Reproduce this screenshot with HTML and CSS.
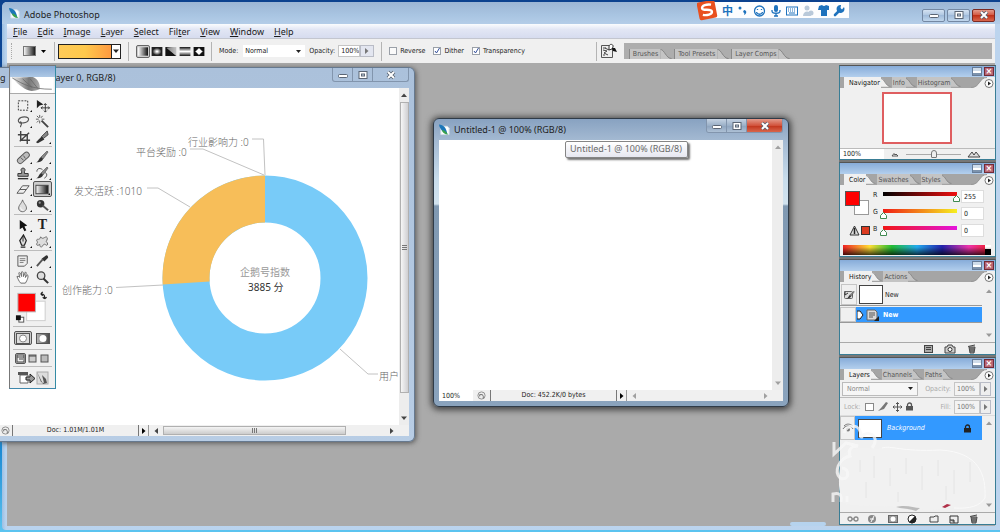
FILE: index.html
```html
<!DOCTYPE html>
<html lang="en">
<head>
<meta charset="utf-8">
<title>Adobe Photoshop</title>
<link rel="stylesheet" href="styles.css">
</head>
<body>
<svg class="defs" aria-hidden="true">
  <defs>
    <linearGradient id="g-bw"><stop offset="0" stop-color="#fff"/><stop offset="1" stop-color="#111"/></linearGradient>
    <linearGradient id="g-wb"><stop offset="0" stop-color="#111"/><stop offset="1" stop-color="#fff"/></linearGradient>
    <radialGradient id="g-rad"><stop offset=".1" stop-color="#fff"/><stop offset="1" stop-color="#222"/></radialGradient>
    <linearGradient id="g-ref" x2="0" y2="1"><stop offset="0" stop-color="#111"/><stop offset=".5" stop-color="#fff"/><stop offset="1" stop-color="#111"/></linearGradient>
    <linearGradient id="g-feather"><stop offset="0" stop-color="#eee"/><stop offset=".6" stop-color="#777"/><stop offset="1" stop-color="#aaa"/></linearGradient>
    <symbol id="tab-end" viewBox="0 0 14 11"><path d="M0 0C4 0 6 11 12 11H0Z" fill="#c4c4c4"/><path d="M0 .5C4 .5 6 10.500 12 10.500" fill="none" stroke="#808080"/></symbol>
    <symbol id="tab-on" viewBox="0 0 14 11"><path d="M0 0C4 0 6 11 12 11H0Z" fill="#f0f0f0"/><path d="M0 .5C4 .5 6 10.500 12 10.500" fill="none" stroke="#8a8a8a"/></symbol>
    <symbol id="fly" viewBox="0 0 24 11"><path d="M0 11C9 11 8 1 16 0H24V11Z" fill="#f0f0f0"/><path d="M0 10.500C9 10.500 8 .5 16 .5" fill="none" stroke="#999"/><circle cx="18" cy="6.500" r="4" fill="#fff" stroke="#777"/><path d="M17 4.500L20 6.500L17 8.500Z" fill="#222"/></symbol>
    <symbol id="win-min" viewBox="0 0 12 10"><rect x="1.500" y="4.500" width="9" height="3" rx="1" fill="#fff" stroke="#5b6675"/></symbol>
    <symbol id="win-max" viewBox="0 0 12 10"><rect x="2" y="1.500" width="8" height="7" fill="#fff" stroke="#5b6675"/><rect x="4.500" y="4" width="3" height="2" fill="#c9d6e6" stroke="#5b6675"/></symbol>
    <symbol id="win-x" viewBox="0 0 12 10"><path d="M3 2L9 8M9 2L3 8" stroke="#56606e" stroke-width="3.600"/><path d="M3 2L9 8M9 2L3 8" stroke="#fff" stroke-width="2"/></symbol>
    <symbol id="ps" viewBox="0 0 12 12"><path d="M2 2H9L11 4V11H2Z" fill="#fff" stroke="#d5dfe6"/><path d="M0 0C5 0 8 4 9 10C5 9 1 6 0 0Z" fill="#1c76b8"/><path d="M3 6C6 6 8 8 10 11C6 11 4 9 3 6Z" fill="#3ba24e"/></symbol>
    <symbol id="spin" viewBox="0 0 10 10"><circle cx="5" cy="5" r="4" fill="#eee" stroke="#888"/><path d="M3 4H6L7 6V8M3 4V6" fill="none" stroke="#666"/></symbol>
    <symbol id="note" viewBox="0 0 14 12"><path d="M1 1H9L11 3V11H1Z" fill="#d8d8d8" stroke="#666"/><path d="M3 4H9M3 6H9M3 8H7" stroke="#555"/><path d="M8 12L13 7V12Z" fill="#222"/></symbol>
    <symbol id="trash" viewBox="0 0 12 10"><path d="M3 3H9L8 9H4Z" fill="#999" stroke="#444"/><path d="M2 2.500L9 1M5 4V8M7 4V8" stroke="#444"/></symbol>
    <symbol id="lock" viewBox="0 0 9 9"><path d="M2.500 4V3A2 2 0 0 1 6.500 3V4" fill="none" stroke="currentColor" stroke-width="1.300"/><rect x="1" y="4" width="7" height="4.500" fill="currentColor"/></symbol>
    <symbol id="brush" viewBox="0 0 14 14"><path d="M12 1L13 2L8 9L6 7Z" fill="#888" stroke="#444" stroke-width=".6"/><path d="M6 7L8 9C7 12 4 12 1 12.500C4 11 4 8 6 7Z" fill="#333"/></symbol>
    <symbol id="up" viewBox="0 0 8 6"><path d="M1 5L4 1.500L7 5Z" fill="currentColor"/></symbol>
    <symbol id="down" viewBox="0 0 8 6"><path d="M1 1.500L4 5L7 1.500Z" fill="currentColor"/></symbol>
    <symbol id="left" viewBox="0 0 6 8"><path d="M5 1L1.500 4L5 7Z" fill="currentColor"/></symbol>
    <symbol id="right" viewBox="0 0 6 8"><path d="M1 1L4.500 4L1 7Z" fill="currentColor"/></symbol>
  </defs>
</svg>

<div class="app">
  <header class="titlebar">
    <svg class="app-icon"><use href="#ps"/></svg>
    <h1 class="app-title">Adobe Photoshop</h1>
    <div class="app-buttons">
      <button class="app-btn" aria-label="Minimize"><svg class="glyph"><use href="#win-min"/></svg></button>
      <button class="app-btn" aria-label="Restore"><svg class="glyph"><use href="#win-max"/></svg></button>
      <button class="app-btn red" aria-label="Close"><svg class="glyph"><use href="#win-x"/></svg></button>
    </div>
  </header>
  <nav class="menubar">
    <button><u>F</u>ile</button><button><u>E</u>dit</button><button><u>I</u>mage</button><button><u>L</u>ayer</button><button><u>S</u>elect</button><button>Fil<u>t</u>er</button><button><u>V</u>iew</button><button><u>W</u>indow</button><button><u>H</u>elp</button>
  </nav>
  <div class="options">
    <i class="grip"></i>
    <button class="tool-preset" aria-label="Gradient tool preset"><svg width="24" height="12" viewBox="0 0 24 12"><rect x=".5" y="1.500" width="12" height="9" fill="url(#g-bw)" stroke="#777"/><path d="M18 5H23L20.500 8Z"/></svg></button>
    <i class="rule"></i>
    <button class="gradient-pick" aria-label="Gradient picker"><span class="ramp"></span><svg width="8" height="6"><use href="#down"/></svg></button>
    <i class="rule"></i>
    <div class="kinds">
      <button class="kind on" aria-label="Linear"><svg viewBox="0 0 12 10"><rect width="12" height="10" fill="url(#g-bw)"/></svg></button>
      <button class="kind" aria-label="Radial"><svg viewBox="0 0 12 10"><rect width="12" height="10" fill="#222"/><rect x="1" y="1" width="10" height="8" fill="url(#g-rad)"/></svg></button>
      <button class="kind" aria-label="Angle"><svg viewBox="0 0 12 10"><rect width="12" height="10" fill="url(#g-wb)"/><path d="M0 0L6 5L12 10H0Z" fill="#111"/><path d="M1 1L12 0V10Z" fill="#aaa" opacity=".7"/></svg></button>
      <button class="kind" aria-label="Reflected"><svg viewBox="0 0 12 10"><rect width="12" height="10" fill="url(#g-ref)"/></svg></button>
      <button class="kind" aria-label="Diamond"><svg viewBox="0 0 12 10"><rect width="12" height="10" fill="#111"/><path d="M6 1L10 5L6 9L2 5Z" fill="#fff" stroke="#888"/></svg></button>
    </div>
    <i class="rule"></i>
    <label class="field">Mode: <select class="mode"><option>Normal</option></select></label>
    <label class="field opacity">Opacity: <input class="pct" value="100%"></label><button class="step" aria-label="Opacity slider"><svg width="6" height="8"><use href="#right"/></svg></button>
    <i class="rule"></i>
    <label class="check"><input type="checkbox"> Reverse</label>
    <label class="check"><input type="checkbox" checked> Dither</label>
    <label class="check"><input type="checkbox" checked> Transparency</label>
    <i class="rule last"></i>
    <button class="file-btn" aria-label="Toggle palettes"><svg width="18" height="16" viewBox="0 0 18 16"><path d="M1.500 2.500H10L12.500 5V14.500H1.500Z" fill="#eee" stroke="#555"/><path d="M3 5H6M3 7L7 8L4 10L8 12M3 12H5M5 5L9 7" fill="none" stroke="#444"/><path d="M9 4C9 0 14 1 13 4L12 6L9 7Z" fill="#fff" stroke="#333"/><path d="M12 5H15L17 9L13 8Z" fill="#111"/></svg></button>
    <div class="well">
      <button class="tab">Brushes</button><svg class="slope"><use href="#tab-end"/></svg>
      <button class="tab">Tool Presets</button><svg class="slope"><use href="#tab-end"/></svg>
      <button class="tab">Layer Comps</button><svg class="slope"><use href="#tab-end"/></svg>
    </div>
  </div>
  <main class="workspace"><i class="peek"></i></main>
</div>

<div class="ime">
  <svg width="152" height="20" viewBox="0 0 152 20">
    <rect x="14" y="1" width="138" height="16" fill="#fdfdfe"/>
    <g transform="rotate(-11 10 9)"><rect x="1" y="0" width="18" height="18" rx="2" fill="#e9501f"/><path d="M15 4.500C11 3 5.500 3.500 5.500 6.500C5.500 9.500 14.500 8 14.500 11.500C14.500 14.500 8.500 14.500 5 13" fill="none" stroke="#fff" stroke-width="2.400"/></g>
    <text class="ime-text" x="25" y="14">中</text>
    <g fill="#1e72bd"><circle cx="43" cy="7" r="1.500"/><path d="M47 9C50 9 50 13 47 14C48 12 47 12 46 11Z"/></g>
    <g fill="none" stroke="#1e72bd" stroke-width="1.300"><circle cx="62.500" cy="10" r="5"/><path d="M59.500 11C60 14 65 14 65.500 11M60.500 8V9M64.500 8V9"/></g>
    <rect x="77" y="4" width="4" height="7" rx="2" fill="#1e72bd"/><path d="M75 9V10C75 13 83 13 83 10V9M79 12V15M77 15H81" fill="none" stroke="#1e72bd" stroke-width="1.300"/>
    <rect x="89.500" y="6" width="11" height="8" fill="none" stroke="#1e72bd"/><path d="M91 8H99M91 10H99" stroke="#1e72bd" stroke-dasharray="1 1"/><path d="M92 12H98" stroke="#1e72bd"/>
    <g fill="#b9c9da"><circle cx="110" cy="7" r="2.500"/><path d="M106 15C106 9 114 9 114 15Z"/><circle cx="114" cy="12" r="2.500"/></g>
    <path d="M122 5L125 4Q127 6 129 4L132 5V9H130V15H124V9H121Z" fill="#1e72bd"/>
    <path d="M138 14L143 9" stroke="#1e72bd" stroke-width="2.600" stroke-linecap="round"/><path d="M147 6A4 4 0 1 1 144 4L143.500 7L145 8.500Z" fill="#1e72bd"/>
  </svg>
</div>

<section class="doc doc-back">
  <header class="doc-title">
    <span>g</span><span class="doc-name">ayer 0, RGB/8)</span>
    <div class="doc-buttons">
      <button class="doc-btn" aria-label="Minimize"><svg class="glyph"><use href="#win-min"/></svg></button><button class="doc-btn" aria-label="Restore"><svg class="glyph"><use href="#win-max"/></svg></button><button class="doc-btn wide" aria-label="Close"><svg class="glyph"><use href="#win-x"/></svg></button>
    </div>
  </header>
  <div class="doc-body">
    <svg class="chart" width="399" height="337" viewBox="0 88 399 337" role="img" aria-label="企鹅号指数">
      <circle cx="265" cy="278" r="79" fill="none" stroke="#78cbf8" stroke-width="47"/>
      <path d="M265 175.500A102.500 102.500 0 0 0 162.700 284.400L209.600 281.500A55.500 55.500 0 0 1 265 222.500Z" fill="#f7be59"/>
      <g fill="none" stroke="#c2c2c2"><path d="M252 139H263.500L265 175"/><path d="M190 149H203L264 175"/><path d="M147 188H158L190 207"/><path d="M116 287.500L163 285"/><path d="M340 349L368 374H378"/></g>
      <g class="chart-label"><text x="188" y="146">行业影响力 :0</text><text x="136" y="156">平台奖励 :0</text><text x="74" y="195">发文活跃 :1010</text><text x="62" y="294">创作能力 :0</text><text x="379" y="380">用户</text></g>
      <text class="chart-name" x="240" y="276">企鹅号指数</text><text class="chart-value" x="248" y="291">3885 分</text>
    </svg>
    <div class="vscroll"><svg width="8" height="6"><use href="#up"/></svg><i class="vthumb"></i><svg width="8" height="6"><use href="#down"/></svg></div>
  </div>
  <footer class="status">
    <svg class="spin"><use href="#spin"/></svg>
    <span class="info">Doc: 1.01M/1.01M</span>
    <button class="more" aria-label="Status menu"><svg width="6" height="8"><use href="#right"/></svg></button>
    <div class="hscroll"><svg width="6" height="8"><use href="#left"/></svg><i class="hthumb"></i><svg width="6" height="8"><use href="#right"/></svg></div>
  </footer>
</section>

<section class="doc doc-front">
  <header class="doc-title">
    <svg class="doc-icon"><use href="#ps"/></svg><span>Untitled-1 @ 100% (RGB/8)</span>
    <div class="doc-buttons">
      <button class="doc-btn" aria-label="Minimize"><svg class="glyph"><use href="#win-min"/></svg></button><button class="doc-btn" aria-label="Restore"><svg class="glyph"><use href="#win-max"/></svg></button><button class="doc-btn wide red" aria-label="Close"><svg class="glyph"><use href="#win-x"/></svg></button>
    </div>
  </header>
  <div class="doc-body blank"><div class="vscroll idle"><svg width="8" height="6"><use href="#up"/></svg><svg width="8" height="6"><use href="#down"/></svg></div></div>
  <footer class="status">
    <input class="zoom" value="100%" aria-label="Zoom">
    <svg class="spin"><use href="#spin"/></svg>
    <span class="info">Doc: 452.2K/0 bytes</span>
    <button class="more" aria-label="Status menu"><svg width="6" height="8"><use href="#right"/></svg></button>
    <div class="hscroll idle"><svg width="6" height="8"><use href="#left"/></svg><svg width="6" height="8"><use href="#right"/></svg></div>
  </footer>
  <div class="tooltip" role="tooltip">Untitled-1 @ 100% (RGB/8)</div>
</section>

<aside class="toolbox">
  <div class="tb-head"></div>
  <svg class="feather" viewBox="0 0 45 17"><rect width="45" height="17" fill="#fff"/><path d="M1 0C9 1 17 0 23 0C29 2 31 9 30 13C22 16 17 15 12 11C8 8 4 5 1 0Z" fill="url(#g-feather)"/><path d="M1 1C13 8 22 13 43 13M12 2L22 11M20 2L28 12" fill="none" stroke="#666" stroke-width=".8"/></svg>
  <div class="tools">
    <button class="tool sub" aria-label="Marquee"><svg viewBox="0 0 16 16"><rect x="2.500" y="3" width="10" height="10" fill="none" stroke="#333" stroke-dasharray="2 1.300"/></svg></button>
    <button class="tool" aria-label="Move"><svg viewBox="0 0 16 16"><path d="M2 2V11L5 8L9 7Z" fill="#222"/><path d="M11 6V15M6.500 10.500H15.500M9.500 7.500L11 6L12.500 7.500M9.500 13.500L11 15L12.500 13.500M8 9L6.500 10.500L8 12M14 9L15.500 10.500L14 12" fill="none" stroke="#333"/></svg></button>
    <button class="tool sub" aria-label="Lasso"><svg viewBox="0 0 16 16"><path d="M5 10C0 8 3 3 9 3C16 3 14 9 8 9.500C5 10 4 7 5.500 9C7 12 4 12 5 14" fill="none" stroke="#555" stroke-width="1.200"/></svg></button>
    <button class="tool" aria-label="Magic wand"><svg viewBox="0 0 16 16"><path d="M7 7L14 14" stroke="#444" stroke-width="2"/><path d="M5 1V4M5 7V10M1 5.500H4M7 5.500H10M2 2L4 4M8 2L6.500 4M2 9L4 7" stroke="#555"/></svg></button>
    <button class="tool" aria-label="Crop"><svg viewBox="0 0 16 16"><path d="M5 1V11H15M2 5H12V15M4 12L14 3" fill="none" stroke="#444" stroke-width="1.500"/></svg></button>
    <button class="tool sub" aria-label="Slice"><svg viewBox="0 0 16 16"><path d="M13 1L14 5L9 9L7 7Z" fill="#888" stroke="#444"/><path d="M7 7L10 10L3 14L1 13Z" fill="#333"/></svg></button>
    <hr>
    <button class="tool sub" aria-label="Healing brush"><svg viewBox="0 0 16 16"><rect x="0" y="5.500" width="15" height="6" rx="3" transform="rotate(-42 7.500 8)" fill="#bbb" stroke="#555"/><path d="M5 8L8 11M8 6L10 9" stroke="#555"/></svg></button>
    <button class="tool sub" aria-label="Brush"><svg viewBox="0 0 16 16"><use href="#brush" width="15" height="15"/></svg></button>
    <button class="tool sub" aria-label="Clone stamp"><svg viewBox="0 0 16 16"><path d="M6 6C3 1 12 1 9 6V8H13V11H2V8H6Z" fill="#999" stroke="#333"/><path d="M2 13.500H13" stroke="#333" stroke-width="1.500"/></svg></button>
    <button class="tool sub" aria-label="History brush"><svg viewBox="0 0 16 16"><use href="#brush" width="15" height="15"/><path d="M2 6C2 2 6 2 8 4M11 7C14 9 12 12 10 13" fill="none" stroke="#444"/></svg></button>
    <button class="tool sub" aria-label="Eraser"><svg viewBox="0 0 16 16"><path d="M1 12L7 4H14L8 12ZM4 8H11" fill="#eee" stroke="#555"/></svg></button>
    <button class="tool sub on" aria-label="Gradient"><svg viewBox="0 0 16 16"><rect x="1" y="3.500" width="13" height="9" fill="url(#g-bw)" stroke="#444"/></svg></button>
    <button class="tool sub" aria-label="Blur"><svg viewBox="0 0 16 16"><path d="M7 2C8 6 12 8 11 12C9 16 4 15 3 12C2 8 6 6 7 2Z" fill="#ddd" stroke="#666"/><path d="M5 10C5 12 6 13 8 13" fill="none" stroke="#fff"/></svg></button>
    <button class="tool sub" aria-label="Dodge"><svg viewBox="0 0 16 16"><circle cx="6" cy="6" r="4" fill="#333"/><path d="M8 8L14 13" stroke="#555" stroke-width="2"/><circle cx="5" cy="5" r="1.200" fill="#999"/></svg></button>
    <hr>
    <button class="tool sub" aria-label="Path selection"><svg viewBox="0 0 16 16"><path d="M4 2V12L7 10L9 14L11 13L9 9L12 8Z" fill="#111"/></svg></button>
    <button class="tool sub type" aria-label="Type">T</button>
    <button class="tool sub" aria-label="Pen"><svg viewBox="0 0 16 16"><path d="M8 1L11 7L9 12H6L4 7ZM5 14H10" fill="#ddd" stroke="#222" stroke-width="1.300"/><path d="M7.500 2V8" stroke="#222"/></svg></button>
    <button class="tool sub" aria-label="Custom shape"><svg viewBox="0 0 16 16"><path d="M6 3C8 6 9 4 12 3C14 4 13 6 12 8C14 10 14 12 12 12C10 10 9 11 8 13C6 15 5 13 5 11C3 13 1 12 2 10C4 8 1 8 2 6C3 5 5 7 6 3Z" fill="#ddd" stroke="#666"/></svg></button>
    <hr>
    <button class="tool sub" aria-label="Notes"><svg viewBox="0 0 16 16"><path d="M2 2H12V10L9 13H2Z" fill="#eee" stroke="#555"/><path d="M4 5H10M4 7H10M4 9H8" stroke="#777"/></svg></button>
    <button class="tool sub" aria-label="Eyedropper"><svg viewBox="0 0 16 16"><path d="M8 6L2 13" stroke="#555" stroke-width="2"/><path d="M7 5L10 8L14 4C14 1 12 1 11 2Z" fill="#333"/></svg></button>
    <button class="tool" aria-label="Hand"><svg viewBox="0 0 16 16"><path d="M5 14C3 12 2 9 1 7C3 6 4 8 4 8L3 3C5 2 5 5 6 7L6 2C8 1 8 4 8 7L10 2C12 3 10 5 10 8L12 5C14 6 12 11 10 14Z" fill="#fff" stroke="#666"/></svg></button>
    <button class="tool" aria-label="Zoom tool"><svg viewBox="0 0 16 16"><circle cx="6.500" cy="6" r="4" fill="#ddd" stroke="#444" stroke-width="1.400"/><path d="M9 9L14 14" stroke="#333" stroke-width="2.200"/></svg></button>
    <hr>
  </div>
  <svg class="swatches" viewBox="0 0 45 38"><rect x="16.500" y="12.500" width="19" height="20" fill="#fff" stroke="#ccc"/><rect x="7.500" y="4.500" width="18" height="19" fill="#f00" stroke="#b9b9b9"/><path d="M31 5C35 5 35 7 35 10M31 5L33 3M31 5L33 7M35 10L33 8.500M35 10L37 8.500" fill="none" stroke="#222" stroke-width="1.300"/><rect x="8.500" y="29" width="5" height="5" fill="#fff" stroke="#555"/><rect x="5.500" y="27" width="5" height="5" fill="#111"/></svg>
  <div class="row two"><button class="mask on" aria-label="Standard mode"><svg viewBox="0 0 14 11"><rect x=".5" y=".5" width="13" height="10" fill="#ddd" stroke="#555"/><circle cx="7" cy="5.500" r="3.500" fill="#fff" stroke="#888"/></svg></button><button class="mask" aria-label="Quick mask"><svg viewBox="0 0 14 11"><rect width="14" height="11" fill="url(#g-bw)"/><rect x=".5" y=".5" width="13" height="10" fill="#777" fill-opacity=".5" stroke="#555"/><circle cx="7" cy="5.500" r="3.500" fill="#fff"/></svg></button></div>
  <div class="row three"><button class="screen on" aria-label="Standard screen"><svg viewBox="0 0 9 9"><rect x="1" y="1" width="7" height="7" fill="#eee" stroke="#444"/><path d="M1 3H8M3 5H7" stroke="#444"/></svg></button><button class="screen" aria-label="Full screen with menu"><svg viewBox="0 0 9 9"><rect x="1" y="1" width="7" height="7" fill="#ccc" stroke="#555"/><path d="M1 2H8" stroke="#444"/></svg></button><button class="screen" aria-label="Full screen"><svg viewBox="0 0 9 9"><rect x="1" y="1" width="7" height="7" fill="#bbb" stroke="#555"/></svg></button></div>
  <button class="jump" aria-label="Edit in ImageReady"><svg viewBox="0 0 32 14"><path d="M3 4V12H11V4Z" fill="#fff" stroke="#666"/><path d="M1 1H11V4H1Z" fill="#555"/><path d="M9 6H13V3L18 7.500L13 12V9H9Z" fill="#999" stroke="#222"/><rect x="20" y="1" width="11" height="12" fill="#ddd" stroke="#aaa"/><path d="M20 1L24 11L27 12L25 4L29 8L30 12L26 13Z" fill="#555"/></svg></button>
</aside>

<aside class="dock">
  <section class="palette navigator">
    <header class="p-head"><button class="p-min" aria-label="Collapse"></button><button class="p-close" aria-label="Close">×</button></header>
    <div class="p-tabs"><button class="tab current">Navigator</button><svg class="slope"><use href="#tab-on"/></svg><button class="tab">Info</button><svg class="slope"><use href="#tab-end"/></svg><button class="tab">Histogram</button><svg class="slope"><use href="#tab-end"/></svg><svg class="fly"><use href="#fly"/></svg></div>
    <div class="preview"><div class="view"></div></div>
    <div class="nav-foot"><input class="nav-zoom" value="100%" aria-label="Navigator zoom"><svg width="10" height="8" viewBox="0 0 10 8"><path d="M2 6L4 3.500L5 5L6 4L8 6Z" fill="#fff" stroke="#555"/></svg><input class="nav-range" type="range" value="50" aria-label="Zoom level"><svg width="14" height="8" viewBox="0 0 14 8"><path d="M1 7L5 2L7 5L9 2L13 7Z" fill="#ddd" stroke="#444"/></svg></div>
  </section>

  <section class="palette color">
    <header class="p-head"><button class="p-min" aria-label="Collapse"></button><button class="p-close" aria-label="Close">×</button></header>
    <div class="p-tabs"><button class="tab current">Color</button><svg class="slope"><use href="#tab-on"/></svg><button class="tab">Swatches</button><svg class="slope"><use href="#tab-end"/></svg><button class="tab">Styles</button><svg class="slope"><use href="#tab-end"/></svg><svg class="fly"><use href="#fly"/></svg></div>
    <div class="color-body">
      <svg class="chips" viewBox="0 0 30 54"><rect x="11.500" y="14.500" width="14" height="14" fill="#fff" stroke="#999"/><rect x="2.500" y="5.500" width="14" height="14" fill="#f00" stroke="#555"/><path d="M11.500 40L16 49H7Z" fill="#ddd" stroke="#333"/><path d="M11.500 42V48" stroke="#222" stroke-width="1.500"/><rect x="18.500" y="40.500" width="8" height="8" fill="#dc3b20" stroke="#333"/></svg>
      <div class="channels">
        <div class="chan"><label for="r">R</label><input id="r" class="bar red-bar" type="range" max="255" value="255"><input class="num" value="255" aria-label="Red value"></div>
        <div class="chan"><label for="g">G</label><input id="g" class="bar green-bar" type="range" max="255" value="0"><input class="num" value="0" aria-label="Green value"></div>
        <div class="chan"><label for="b">B</label><input id="b" class="bar blue-bar" type="range" max="255" value="0"><input class="num" value="0" aria-label="Blue value"></div>
      </div>
    </div>
    <div class="spectrum"></div>
  </section>

  <section class="palette history">
    <header class="p-head"><button class="p-min" aria-label="Collapse"></button><button class="p-close" aria-label="Close">×</button></header>
    <div class="p-tabs"><button class="tab current">History</button><svg class="slope"><use href="#tab-on"/></svg><button class="tab">Actions</button><svg class="slope"><use href="#tab-end"/></svg><svg class="fly"><use href="#fly"/></svg></div>
    <div class="list">
      <div class="items">
        <div class="snap"><span class="cell"><svg width="12" height="12" viewBox="0 0 12 12"><rect x="1.500" y="2.500" width="8" height="7" rx="1" fill="#ddd" stroke="#666"/><use href="#brush" x="3" y="1" width="9" height="10"/><path d="M2 2V6L5 4" fill="none" stroke="#333"/></svg></span><span class="thumb"></span><span>New</span></div>
        <div class="state"><span class="cell"></span><svg width="24" height="12" viewBox="0 0 24 12"><path d="M0 2H3L6 6L3 10H0Z" fill="#fff" stroke="#222"/><use href="#note" x="9" width="14" height="12"/></svg><b>New</b></div>
      </div>
      <div class="p-scroll"><svg width="8" height="6"><use href="#up"/></svg><svg width="8" height="6"><use href="#down"/></svg></div>
    </div>
    <footer class="p-foot"><button aria-label="New document"><svg viewBox="0 0 12 10"><rect x="2.500" y="1.500" width="8" height="7" fill="#aaa" stroke="#444"/><path d="M4 3.500H9M4 5.500H9" stroke="#444"/></svg></button><button aria-label="New snapshot"><svg viewBox="0 0 12 10"><path d="M1 3H3L4 1H8L9 3H11V9H1Z" fill="#ccc" stroke="#444"/><circle cx="6" cy="5.500" r="2" fill="#fff" stroke="#333"/></svg></button><button aria-label="Delete state"><svg><use href="#trash"/></svg></button></footer>
  </section>

  <section class="palette layers">
    <header class="p-head"><button class="p-min" aria-label="Collapse"></button><button class="p-close" aria-label="Close">×</button></header>
    <div class="p-tabs"><button class="tab current">Layers</button><svg class="slope"><use href="#tab-on"/></svg><button class="tab">Channels</button><svg class="slope"><use href="#tab-end"/></svg><button class="tab">Paths</button><svg class="slope"><use href="#tab-end"/></svg><svg class="fly"><use href="#fly"/></svg></div>
    <div class="l-row"><select class="blend" aria-label="Blend mode" disabled><option>Normal</option></select><label class="dim" for="lo">Opacity:</label><input id="lo" class="pct" value="100%"><button class="step" aria-label="Layer opacity slider"><svg width="6" height="8"><use href="#right"/></svg></button></div>
    <div class="l-row second"><span class="dim">Lock:</span><svg class="locks" viewBox="0 0 56 12"><rect x="2.500" y="2.500" width="8" height="7" fill="#fff" stroke="#888"/><path d="M23 1L18 7L15 10L21 8L25 2Z" fill="#777"/><path d="M34.500 1.500V10.500M30 6H39M33 3L34.500 1.500L36 3M33 9L34.500 10.500L36 9M31.500 4.500L30 6L31.500 7.500M37.500 4.500L39 6L37.500 7.500" fill="none" stroke="#555"/><use href="#lock" x="42" y="1" width="9" height="9" color="#555"/></svg><label class="dim" for="lf">Fill:</label><input id="lf" class="pct" value="100%"><button class="step" aria-label="Fill slider"><svg width="6" height="8"><use href="#right"/></svg></button></div>
    <div class="list tall">
      <div class="items">
        <div class="layer"><span class="cell"><svg width="12" height="10" viewBox="0 0 12 10"><path d="M1 6C3 2 9 2 11 6M2 3C5 0 8 1 11 3" fill="none" stroke="#777"/><circle cx="6" cy="6.500" r="2" fill="#777"/></svg></span><span class="thumb"></span><em>Background</em><svg class="locked" width="9" height="9"><use href="#lock"/></svg></div>
      </div>
      <div class="p-scroll"><svg width="8" height="6"><use href="#up"/></svg><svg width="8" height="6"><use href="#down"/></svg></div>
    </div>
    <footer class="p-foot spread"><button aria-label="Link"><svg viewBox="0 0 12 10"><path d="M5 5H7M1 5A2 2 0 0 1 5 5A2 2 0 0 1 1 5M7 5A2 2 0 0 1 11 5A2 2 0 0 1 7 5" fill="none" stroke="#888" stroke-width="1.300"/></svg></button><button aria-label="Layer style"><svg viewBox="0 0 12 10"><circle cx="5" cy="5" r="4" fill="#888"/><path d="M4 8L7 2M3 5H7" stroke="#fff"/></svg></button><button aria-label="Mask"><svg viewBox="0 0 12 10"><rect x="1.500" y="1.500" width="9" height="7" fill="#999" stroke="#666"/><circle cx="6" cy="5" r="2.500" fill="#fff"/></svg></button><button aria-label="Adjustment layer"><svg viewBox="0 0 12 10"><circle cx="5" cy="5" r="4" fill="#fff" stroke="#222"/><path d="M8 2A4 4 0 1 1 2 8Z" fill="#222"/></svg></button><button aria-label="New group"><svg viewBox="0 0 12 10"><path d="M2 8V3H6L7 2H10V8Z" fill="#eee" stroke="#444"/></svg></button><button aria-label="New layer"><svg viewBox="0 0 12 10"><path d="M2 2H10V9H2Z" fill="#eee" stroke="#333"/><path d="M2 6H6V9" fill="#999" stroke="#333"/></svg></button><button aria-label="Delete layer"><svg><use href="#trash"/></svg></button></footer>
    <svg class="smudge" viewBox="0 0 165 105" aria-hidden="true"><path d="M12 40C18 28 40 34 52 32C62 28 70 36 110 34C150 36 156 60 155 82C150 90 140 93 124 92C110 92 104 96 86 93C60 88 40 92 16 88C8 84 7 62 12 40Z" fill="#f1f1f1"/><g fill="none" stroke="#e4e4e4"><path d="M30 44V56M44 40V62M60 52V70M76 42V58M92 50V74M108 44V60M124 54V78M140 46V66M36 66V82M68 76V86M116 70V84"/><path d="M52 32C62 29 70 36 110 34C150 36 156 60 155 82C150 90 140 93 124 92" stroke="#fafafa"/></g><path d="M66 91C76 88 84 92 90 92L86 95C78 92 72 93 66 91Z" fill="#bbb"/><path d="M14 17C16 8 32 6 31 22C36 12 52 20 42 32M4 26V38L16 27L28 30C20 30 18 35 20 40C8 43 4 56 10 62C20 66 20 52 12 52M3 86V78C10 76 12 79 11 86M17 86V80" fill="none" stroke="#f7f7f7" stroke-width="3" opacity=".8"/><path d="M112 91L117 88L121 89L115 92Z" fill="#b03048"/></svg>
  </section>
</aside>
</body>
</html>
```
FILE: styles.css
```css
* { box-sizing: border-box; }

:root {
  --ui: "DejaVu Sans Condensed", "DejaVu Sans", sans-serif;
  --title: "Noto Sans", "Open Sans", sans-serif;
  --face: #f0f0f0;
  --work: #aaaaaa;
}

body {
  position: relative;
  margin: 0;
  height: 100vh;
  overflow: hidden;
  background: linear-gradient(#0c418e, #0b53a8 40%, #1c8bd4 85%, #5cc4f0);
  color: #222;
  font: 7px/10px var(--ui);
}

button, input, select {
  margin: 0;
  padding: 0;
  border: 0;
  border-radius: 0;
  background: none;
  color: inherit;
  font: inherit;
}

button { display: flex; align-items: center; justify-content: center; }
svg { display: block; flex: none; }
.defs { position: absolute; width: 0; height: 0; }

/* Application frame */
.app {
  display: flex;
  flex-direction: column;
  height: calc(100vh - 4px);
  margin: 2px 0 2px 2px;
  padding: 0 5px 4px;
  border-radius: 5px 0 0 4px;
  background: linear-gradient(90deg, #9dbfe2, #b9d3ee 4px, #bcd4ee);
}
.titlebar {
  display: flex;
  align-items: center;
  height: 22px;
  gap: 4px;
  margin: 0 -5px;
  padding: 0 5px;
  border-radius: 5px 0 0 0;
  background: linear-gradient(#9cb5d4, #a9c5e2 60%, #b4cde8);
}
.app-icon { width: 11px; height: 11px; margin-left: 2px; }
.app-title { margin: 4px 0 0; font: 9px/14px var(--title); }
.app-buttons { display: flex; gap: 2px; margin: 4px 0 0 auto; }
.app-btn {
  width: 23px;
  height: 13px;
  border: 1px solid #7488a3;
  border-radius: 2px;
  background: linear-gradient(#d4e2f2, #adc5e0 50%, #a0bbda 50%, #c0d6ec);
}
.glyph { width: 12px; height: 10px; }
.red { border-color: #7c2a22; background: linear-gradient(#e39b8c, #d2533c 50%, #c03219 50%, #d8664d); }

.menubar {
  display: flex;
  height: 15px;
  padding-left: 6px;
  gap: 10px;
  background: linear-gradient(#fafcfe, #e2e6f4 40%, #d6dcef);
  border-bottom: 1px solid #c3c6cf;
}
.menubar button { font: 9px/13px var(--title); color: #1b1b1b; }

.options {
  display: flex;
  align-items: center;
  height: 24px;
  background: var(--face);
}
.grip { width: 3px; height: 16px; margin-left: 4px; border-left: 1px dotted #aaa; }
.tool-preset { margin-left: 9px; }
.rule { width: 1px; height: 19px; margin: 0 7px; background: #b4b4b4; }
.gradient-pick { height: 15px; margin-left: -4px; border: 1px solid #222; background: #fff; }
.ramp { width: 53px; height: 13px; border-right: 1px solid #222; background: linear-gradient(90deg, #ffcb58, #ffc94c 50%, #ff9a40); }
.kinds { display: flex; }
.kinds + .rule { margin-left: 5px; }
.kind { width: 14px; height: 13px; }
.kind svg { width: 12px; height: 9px; }
.kind.on { border: 1px solid #666; border-radius: 2px; background: #ccc; }
.kind.on svg { width: 10px; height: 9px; }
.field { display: flex; align-items: center; gap: 5px; }
.field.opacity { gap: 3px; margin-left: 4px; }
select {
  appearance: none;
  background: #fff url("data:image/svg+xml,%3Csvg xmlns='http://www.w3.org/2000/svg' width='7' height='5'%3E%3Cpath d='M1 1h5L3.500 4z' fill='%23222'/%3E%3C/svg%3E") no-repeat right 3px center;
}
.mode { width: 62px; height: 12px; padding-left: 2px; }
.pct { width: 22px; height: 12px; padding-left: 2px; border: 1px solid #c5c5c5; background: #fff; }
.step { width: 14px; height: 12px; border: 1px solid #b9bcc6; background: #e3e6f0; color: #777; }
.check { display: flex; align-items: center; gap: 3px; margin-right: 8px; }
.check input { appearance: none; width: 8px; height: 8px; border: 1px solid #9aa0a8; background: #fafafa; }
.check input:checked { background: #fff url("data:image/svg+xml,%3Csvg xmlns='http://www.w3.org/2000/svg' viewBox='0 0 6 6'%3E%3Cpath d='M1 3l1.500 2L5.500 0' fill='none' stroke='%23334f9c'/%3E%3C/svg%3E"); }
.rule.last { margin-left: 63px; margin-right: 3px; }
.well {
  display: flex;
  align-items: flex-end;
  flex: 1;
  height: 16px;
  margin: 0 3px 0 6px;
  padding-left: 5px;
  background: #adadad;
}
.tab { height: 10px; padding: 0 1px 0 2px; border-left: 1px solid #888; background: #c4c4c4; color: #555; font: 7px/10px var(--ui); }
.well .tab { padding: 0 2px 0 3px; }
.slope { width: 14px; height: 10px; }
.workspace { flex: 1; position: relative; background: var(--work); }
.peek { position: absolute; right: 169px; bottom: 0; width: 36px; height: 4px; border-radius: 2px; background: #b6d3ee; }

.ime { position: absolute; top: 1px; right: 151px; }
.ime-text { font: bold 11px "Noto Sans CJK SC", sans-serif; fill: #1e72bd; }

/* Document windows */
.doc { position: absolute; font-family: var(--ui); }
.doc-title { display: flex; align-items: center; height: 21px; font: 9px/12px var(--title); }
.doc-buttons { display: flex; align-self: flex-start; margin-left: auto; border: 1px solid #8295ad; border-top: 0; border-radius: 0 0 3px 3px; overflow: hidden; }
.doc-btn { width: 20px; height: 13px; border-right: 1px solid #8295ad; }
.doc-btn.wide { width: 35px; border: 0; }
.doc-back {
  left: 0;
  top: 67px;
  width: 415px;
  padding: 0 5px 5px 0;
  border: 1px solid #66798f;
  border-left: 0;
  border-radius: 0 6px 6px 0;
  background: linear-gradient(#abc1db, #b8cde5);
  box-shadow: 1px 1px 5px #555;
}
.doc-back .doc-title { height: 20px; }
.doc-name { margin-left: 50px; }
.doc-front {
  left: 433px;
  top: 118px;
  width: 356px;
  padding: 0 5px 5px;
  border: 1px solid #2f3b48;
  border-radius: 6px;
  background: linear-gradient(#88a2c1, #a2b8d1 20px, #c8dceb 60px, #d2e3ef 85px, #8099b2 87px, #8aa3bd);
  box-shadow: 0 1px 6px 2px #444;
}
.doc-front .doc-title { gap: 4px; }
.doc-front .doc-btn { background: linear-gradient(#c5d3e3, #9bb0c8 50%, #8ba2bd 50%, #adc0d5); }
.doc-front .doc-btn.red { background: linear-gradient(#e39b8c, #d2533c 50%, #c03219 50%, #d8664d); }
.doc-icon { width: 11px; height: 12px; }
.doc-body { display: flex; justify-content: flex-end; background: #fff; }
.blank { height: 250px; }
.chart { margin-right: auto; }
.chart-label { font: 300 10px "Noto Sans", "Noto Sans CJK SC", sans-serif; fill: #666; }
.chart-name { font: 10px "Noto Sans CJK SC", sans-serif; fill: #999; }
.chart-value { font: 10px "Noto Sans", "Noto Sans CJK SC", sans-serif; fill: #333; }
.vscroll { display: flex; flex-direction: column; align-items: center; justify-content: space-between; width: 11px; padding: 4px 0; background: #ededed; color: #444; }
.vthumb { display: flex; align-items: center; justify-content: center; flex: 1; width: 9px; margin: 4px 0 22px; border: 1px solid #b0b0b0; background: linear-gradient(90deg, #f6f6f6, #cfcfd2); }
.vthumb::after { content: ""; width: 5px; height: 5px; background: repeating-linear-gradient(#777 0 1px, transparent 1px 2px); }
.status { display: flex; align-items: center; height: 11px; background: var(--face); }
.spin { width: 9px; height: 9px; margin: 0 1px; }
.info { width: 127px; height: 11px; margin-left: 1px; border: solid #777; border-width: 0 1px; text-align: center; line-height: 11px; }
.more { width: 10px; height: 11px; border-right: 1px solid #999; color: #000; }
.hscroll { display: flex; flex: 1; align-items: center; justify-content: space-between; padding: 0 14px 0 4px; color: #444; }
.hthumb { width: 183px; height: 9px; margin: 0 auto 0 4px; border: 1px solid #b0b0b0; background: linear-gradient(#f4f4f4, #ccc); }
.hthumb::after { content: ""; display: block; width: 5px; height: 5px; margin: 1px auto; background: repeating-linear-gradient(90deg, #777 0 1px, transparent 1px 2px); }
.idle { color: #a0a0a0; }
.zoom { width: 34px; height: 11px; padding-left: 3px; background: #fff; }
.doc-front .spin { margin: 0 3px 0 4px; }
.tooltip {
  position: absolute;
  left: 131px;
  top: 22px;
  padding: 1px 5px 2px 4px;
  border: 1px solid #858585;
  border-radius: 2px;
  background: linear-gradient(#fff, #e6e7f0);
  box-shadow: 2px 2px 2px #777;
  color: #6a6a6a;
  font: 9px/12px var(--title);
}

/* Toolbox */
.toolbox {
  position: absolute;
  left: 9px;
  top: 65px;
  width: 47px;
  border: 1px solid;
  border-color: #777 #348ba4 #4088ac #777;
  background: var(--face);
}
.tb-head { height: 11px; background: linear-gradient(#86a8d3, #adc8e5); }
.feather { width: 100%; height: 17px; border-bottom: 1px solid #aaa; }
.tools { display: grid; grid-template-columns: 19px 19px; justify-content: center; padding: 3px 0 0 1px; }
.tools hr { grid-column: 1 / 3; width: 100%; height: 1px; margin: 1px 0 2px; border: 0; background: #bcbcbc; }
.tool { position: relative; height: 16px; }
.tool svg { width: 15px; height: 15px; }
.tool.sub::after { content: ""; position: absolute; right: 1px; bottom: 1px; border: 1px solid #111; border-top-color: transparent; border-left-color: transparent; }
.tool.on { border: 1px solid #555; border-radius: 2px; background: #ccc; }
.type { font: bold 14px/16px "Liberation Serif", serif; }
.swatches { width: 45px; height: 37px; }
.row { display: flex; align-items: center; justify-content: center; margin: 0 3px; border-top: 1px solid #bcbcbc; }
.two { height: 23px; gap: 2px; }
.mask { width: 18px; height: 14px; }
.mask svg { width: 14px; height: 11px; }
.mask.on, .screen.on { border: 1px solid #555; border-radius: 2px; background: #ccc; }
.three { height: 17px; gap: 1px; }
.screen { width: 11px; height: 11px; }
.screen svg { width: 9px; height: 9px; }
.jump { width: calc(100% - 6px); height: 22px; margin: 0 3px; border-top: 1px solid #bcbcbc; }
.jump svg { width: 32px; height: 14px; }

/* Palettes */
.dock { position: absolute; top: 65px; right: 4px; display: flex; flex-direction: column; gap: 2px; width: 157px; background: #777; }
.palette { position: relative; display: flex; flex-direction: column; height: 95px; border: 1px solid #397d95; border-top-color: #555; background: var(--face); }
.p-head { display: flex; justify-content: flex-end; gap: 2px; height: 11px; padding: 1px 1px 0; background: linear-gradient(#87acd9, #b3cfed); }
.p-min, .p-close { width: 10px; height: 9px; border: 1px solid #667c99; background: linear-gradient(#cfdcea, #cfdcea 3px, #fff 3px, #fff 5px, #7d93ad 5px); }
.p-close { border-color: #722b36; background: #b96572; color: #fff; font: bold 9px/7px var(--ui); }
.p-tabs { display: flex; flex: none; height: 11px; padding-left: 4px; background: #a5a5a5; }
.p-tabs .tab { height: 11px; padding-left: 1px; border: 0; }
.p-tabs .tab.current { padding-left: 5px; background: var(--face); color: #111; }
.p-tabs .slope { height: 11px; width: 11px; }
.p-tabs .fly { width: 24px; height: 11px; margin-left: auto; }
.preview { flex: 1; display: grid; place-items: center; padding-right: 2px; }
.view { width: 70px; height: 52px; border: 2px solid #df5e60; background: #fff; }
.nav-foot { display: flex; align-items: center; height: 11px; gap: 6px; border-top: 1px solid #bbb; }
.nav-zoom { width: 44px; height: 10px; padding-left: 3px; background: #fff; }
.nav-range { appearance: none; width: 55px; height: 9px; background: linear-gradient(#aaa, #aaa) center / 100% 1px no-repeat; }
.nav-range::-webkit-slider-thumb { appearance: none; width: 6px; height: 8px; border: 1px solid #777; border-radius: 3px 3px 1px 1px; background: #eee; }
.color-body { display: flex; flex: 1; padding-top: 1px; }
.chips { width: 30px; height: 54px; margin-left: 3px; }
.channels { display: flex; flex-direction: column; gap: 4px; padding-top: 4px; }
.chan { display: flex; height: 13px; align-items: flex-start; }
.chan label { width: 7px; }
.bar { appearance: none; width: 80px; height: 12px; margin-right: 1px; background: center 2px / 74px 4px no-repeat; }
.red-bar { background-image: linear-gradient(90deg, #000, #f01010); }
.green-bar { background-image: linear-gradient(90deg, #f01b14, #f5ef20); }
.blue-bar { background-image: linear-gradient(90deg, #f01616, #e414dc); }
.bar::-webkit-slider-thumb { appearance: none; width: 7px; height: 7px; margin-top: 5px; background: url("data:image/svg+xml,%3Csvg xmlns='http://www.w3.org/2000/svg' viewBox='0 0 7 7'%3E%3Cpath d='M.5 6.500V3.500L3.500.5L6.500 3.500V6.500Z' fill='white' stroke='%23408a50'/%3E%3C/svg%3E"); }
.num { width: 23px; height: 13px; padding-left: 2px; border: 1px solid #ddd; background: #fff; }
.spectrum { height: 10px; margin: 0 4px 1px 3px; background: linear-gradient(#000, #000) right bottom / 6px 6px no-repeat, linear-gradient(transparent 20%, #000b), linear-gradient(90deg, #e22, #fd3 18%, #2b3 33%, #2ae 50%, #22a 67%, #e3a 85%, #e24 96%, #fff 96%); }
.list { display: flex; flex: 1; min-height: 0; }
.items { flex: 1; }
.p-scroll { display: flex; flex-direction: column; align-items: center; justify-content: space-between; width: 13px; padding: 4px 0; color: #999; }
.cell { display: flex; align-items: center; justify-content: center; width: 16px; align-self: stretch; border: 1px solid #c5c5c5; }
.thumb { width: 24px; height: 19px; border: 1px solid #444; background: #fff; }
.snap { display: flex; align-items: center; gap: 2px; height: 22px; padding-left: 1px; border-bottom: 1px solid #999; }
.history .list { padding-top: 2px; }
.state { display: flex; align-items: center; gap: 1px; height: 16px; margin-top: 1px; border-bottom: 1px solid #999; background: #3399ff; color: #fff; }
.state .cell { background: var(--face); }
.state b { margin-left: 1px; }
.history { height: 96px; }
.p-foot { display: flex; align-items: center; justify-content: flex-end; gap: 10px; height: 12px; padding-right: 17px; border-top: 1px solid #aaa; }
.p-foot svg { width: 12px; height: 10px; }
.layers { height: 168px; }
.l-row { display: flex; align-items: center; height: 18px; padding: 0 4px 0 2px; border-bottom: 1px solid #bbb; color: #777; }
.dim { color: #aaa; margin-right: 3px; }
.blend { width: 76px; height: 14px; margin-right: auto; padding-left: 4px; border: 1px solid #bbb; background-color: #f6f6f6; color: #888; opacity: 1; }
.l-row .pct { width: 26px; height: 14px; background: #f3f3f3; }
.l-row .step { width: 11px; height: 14px; background: #eee; }
.second { border-bottom-color: #ddd; }
.second .dim:first-child { margin-left: 2px; }
.locks { width: 56px; height: 12px; margin-right: auto; }
.layer { display: flex; align-items: center; gap: 3px; height: 24px; background: #3399ff; color: #fff; }
.layer .cell { width: 15px; background: var(--face); }
.layer em { margin-left: 2px; }
.locked { margin-left: auto; margin-right: 10px; color: #222; }
.p-foot.spread { justify-content: space-between; padding: 0 15px 0 7px; gap: 0; }
.smudge { position: absolute; left: -10px; bottom: 3px; width: 165px; height: 105px; pointer-events: none; }
```
